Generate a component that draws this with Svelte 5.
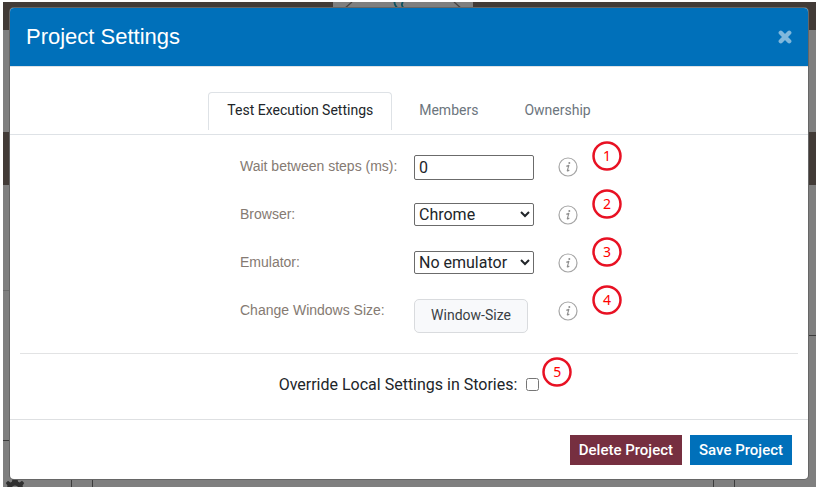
<script>
  const tabs = ['Test Execution Settings', 'Members', 'Ownership'];
  let active = $state(0);
  let wait = $state('0');
  let browser = $state('Chrome');
  let emulator = $state('No emulator');
  let override = $state(false);
</script>

{#snippet badge(n)}
  <span class="badge">
    <svg width="30" height="30" viewBox="0 0 30 30" fill="none" aria-hidden="true">
      <circle cx="15" cy="15" r="13.500" stroke="#e81123" stroke-width="2.500" />
    </svg>
    <span class="number">{n}</span>
  </span>
{/snippet}

{#snippet info(n)}
  <span class="info">
    <svg width="20" height="20" viewBox="0 0 20 20" fill="none" aria-hidden="true">
      <circle cx="10" cy="10" r="9" stroke="#a6a6a6" stroke-width="1.2" />
      <circle cx="11.300" cy="5.900" r="1" fill="#8e8e8e" />
      <path d="M8.200 9.200 10.900 8.400 9.300 13.600Q9.100 14.600 11.300 13" stroke="#8e8e8e" stroke-width="1.1" stroke-linejoin="round" />
    </svg>
    {@render badge(n)}
  </span>
{/snippet}

<div class="screen">
  <div class="behind" aria-hidden="true">
    <div class="bar">
      <svg width="140" height="28" viewBox="0 0 140 28" fill="none">
        <rect width="140" height="28" fill="#7f7f7f" />
        <path d="M11 7 19 0M121 0l8 7" stroke="#4a4543" stroke-width="1.300" />
        <path d="M61.500 0c0 3 1.500 5 4 7M70 0c-2 2-1 5 1 6" stroke="#0b5260" stroke-width="1.800" />
      </svg>
    </div>
    <div class="gap"></div>
    <div class="bar second"></div>
    <div class="board">
      <div class="side left"></div>
      <div class="centre"></div>
      <div class="side right"></div>
      <svg class="gear" width="20" height="20" viewBox="0 0 20 20">
        <path fill="#303030" fill-rule="evenodd" d="M7.500 0h5l.6 2.700 1.500.7L17 1.800 19.200 4l-1.700 2.800.6 1.700L20 9v3l-2.500.7-.6 1.400 1.400 2.400-2.300 2.200-2.300-1.400-1.500.6L11.500 20h-3l-.7-2.300-1.500-.6L4 18.500l-2.400-2.200L3 14l-.6-1.500L0 12V9l2-.6.5-1.600L.8 4 3 1.800l2.400 1.600 1.500-.7zM10 6.500a3.500 3.500 0 1 0 0 7 3.500 3.500 0 0 0 0-7z" />
      </svg>
    </div>
  </div>

  <div class="modal" role="dialog" aria-labelledby="title">
    <header>
      <h1 id="title">Project Settings</h1>
      <button class="close" aria-label="Close">
        <svg width="14" height="14" viewBox="0 0 14 14" aria-hidden="true">
          <path d="M2.800 2.800l8.400 8.400M11.200 2.800l-8.400 8.400" stroke="#80b8dc" stroke-width="4.400" stroke-linecap="round" />
        </svg>
      </button>
    </header>

    <div class="tabs" role="tablist">
      {#each tabs as tab, i}
        <button role="tab" class="tab" class:active={active === i} aria-selected={active === i} onclick={() => (active = i)}>{tab}</button>
      {/each}
    </div>

    <div class="form">
      <div class="row">
        <label for="wait">Wait between steps (ms):</label>
        <input id="wait" type="text" bind:value={wait} />
        {@render info(1)}
      </div>
      <div class="row">
        <label for="browser">Browser:</label>
        <select id="browser" bind:value={browser}>
          <option>Chrome</option>
          <option>Firefox</option>
        </select>
        {@render info(2)}
      </div>
      <div class="row">
        <label for="emulator">Emulator:</label>
        <select id="emulator" bind:value={emulator}>
          <option>No emulator</option>
        </select>
        {@render info(3)}
      </div>
      <div class="row">
        <label for="size">Change Windows Size:</label>
        <button id="size" class="size">Window-Size</button>
        {@render info(4)}
      </div>
    </div>

    <div class="override">
      <label for="override">Override Local Settings in Stories:</label>
      <span class="tick">
        <input id="override" type="checkbox" bind:checked={override} />
        {@render badge(5)}
      </span>
    </div>

    <footer>
      <button class="action delete">Delete Project</button>
      <button class="action save">Save Project</button>
    </footer>
  </div>
</div>

<style>
  :global(body) {
    background: #fff;
  }
  .screen,
  .screen * {
    box-sizing: border-box;
  }
  .screen {
    position: relative;
    min-height: 100vh;
    padding: 8px 9px 10px 10px;
    font-family: Roboto, 'Liberation Sans', sans-serif;
    color: #212529;
  }
  .behind {
    position: absolute;
    inset: 2px 1px 2px 3px;
    display: flex;
    flex-direction: column;
    overflow: hidden;
    background: #7f7f7f;
  }
  .bar {
    display: flex;
    justify-content: center;
    flex: none;
    height: 28px;
    padding-right: 13px;
    background: #423b37;
  }
  .gap {
    flex: none;
    height: 102px;
  }
  .second {
    height: 53px;
  }
  .board {
    position: relative;
    flex: 1;
    display: flex;
    gap: 20px;
  }
  .side {
    flex: none;
    width: 69px;
    border-right: 1px solid #3c3c3c;
  }
  .left {
    background: linear-gradient(#6c6c6c, #6c6c6c) 0 105px / 100% 1px no-repeat,
      linear-gradient(#3c3c3c, #3c3c3c) 0 255px / 100% 1px no-repeat;
  }
  .right {
    width: 82px;
    border-right: 0;
    border-left: 1px solid #3c3c3c;
    background: linear-gradient(#3c3c3c, #3c3c3c) 0 150px / 100% 1px no-repeat;
  }
  .centre {
    flex: 1;
    border: solid #3c3c3c;
    border-width: 0 1px;
  }
  .gear {
    position: absolute;
    left: 2px;
    bottom: -12px;
  }
  .modal {
    position: relative;
    background: #fff;
    border-radius: 4px;
    box-shadow: 0 0 0 1px #666;
  }
  header {
    display: flex;
    align-items: center;
    justify-content: space-between;
    height: 59px;
    padding: 0 16px;
    background: #0070ba;
    border-bottom: 1px solid #dee2e6;
    border-radius: 4px 4px 0 0;
  }
  h1 {
    margin: 0;
    font: 400 22px/30px 'Liberation Sans', Arial, sans-serif;
    color: #fff;
  }
  button {
    font-family: inherit;
    cursor: pointer;
  }
  .close {
    display: flex;
    padding: 0;
    border: 0;
    background: none;
  }
  .tabs {
    display: flex;
    justify-content: center;
    gap: 8px;
    padding: 25px 0 4px;
    border-bottom: 1px solid #dee2e6;
  }
  .tab {
    height: 38px;
    padding: 0 18px 3px;
    border: 1px solid transparent;
    border-bottom: 0;
    border-radius: 4px 4px 0 0;
    background: none;
    font-size: 14px;
    line-height: 20px;
    color: #6c757d;
  }
  .tab.active {
    border-color: #dee2e6;
    color: #212529;
  }
  .form {
    margin: 0 10px;
    padding: 8px 0 18px;
    border-bottom: 1px solid #e2e3e4;
  }
  .row {
    display: grid;
    grid-template-columns: 174px 144px 20px;
    justify-content: center;
    align-items: start;
    justify-items: start;
    height: 48px;
    padding-top: 12px;
  }
  .row label {
    padding-top: 1px;
    font: 14px/20px 'Liberation Sans', Arial, sans-serif;
    color: #857a72;
  }
  .row input,
  .row select {
    width: 120px;
    height: 23px;
    border: 1px solid #6b6b6b;
    border-radius: 2px;
    background: #fff;
    font-family: inherit;
    font-size: 16px;
    color: #212529;
  }
  .row input {
    height: 25px;
    padding: 0 4px;
  }
  .row select {
    padding: 0;
  }
  .size {
    width: 114px;
    height: 34px;
    padding: 0 0 2px;
    border: 1px solid #d9dbde;
    border-radius: 5px;
    background: #f8f9fb;
    font-size: 14px;
    color: #3a3f44;
  }
  .info,
  .tick {
    position: relative;
    display: flex;
  }
  .info {
    margin-top: 2px;
  }
  .badge {
    position: absolute;
    left: 34px;
    top: -16px;
    display: grid;
    place-items: center;
    width: 30px;
    height: 30px;
  }
  .badge svg,
  .number {
    grid-area: 1 / 1;
  }
  .number {
    font: 14px/20px 'Noto Sans', 'Open Sans', sans-serif;
    color: #f00;
  }
  .tick .badge {
    left: 16px;
    top: -21px;
  }
  .override {
    display: flex;
    justify-content: center;
    align-items: center;
    gap: 9px;
    height: 65px;
    padding-bottom: 4px;
    font-size: 16px;
    line-height: 24px;
  }
  .tick input {
    width: 13px;
    height: 13px;
    margin: 0;
  }
  footer {
    display: flex;
    justify-content: flex-end;
    gap: 8px;
    padding: 15px 16px 14px;
    border-top: 1px solid #dee0e2;
  }
  .action {
    height: 30px;
    padding: 0 9px;
    border: 0;
    font-size: 15px;
    font-weight: 500;
    color: #fff;
  }
  .delete {
    background: #762f40;
  }
  .save {
    background: #0070ba;
  }
</style>
